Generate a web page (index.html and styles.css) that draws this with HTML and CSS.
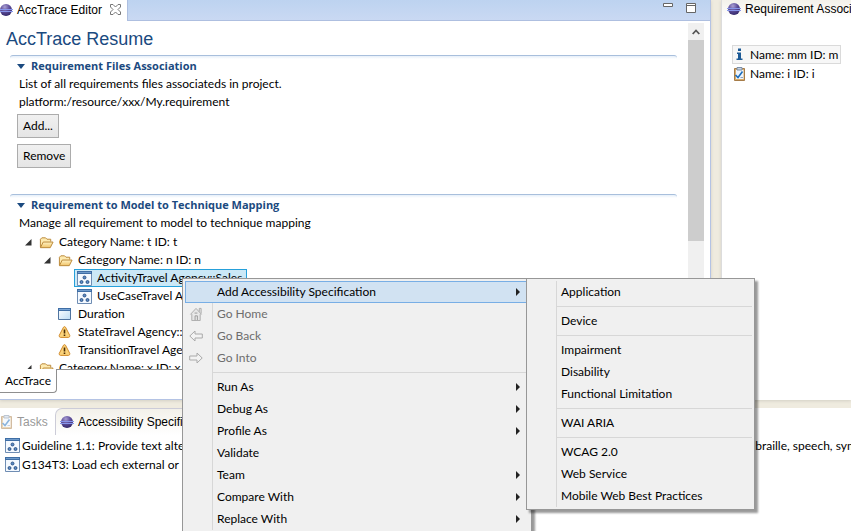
FILE: index.html
```html
<!DOCTYPE html>
<html lang="en">
<head>
<meta charset="utf-8">
<title>AccTrace Editor</title>
<link rel="stylesheet" href="styles.css">
</head>
<body>
<svg class="defs" aria-hidden="true">
  <defs>
    <radialGradient id="orb" cx="40%" cy="25%" r="75%"><stop offset="0" stop-color="#a99fd2"/><stop offset=".5" stop-color="#5f4f9c"/><stop offset="1" stop-color="#35296a"/></radialGradient>
    <linearGradient id="fold" x1="0" y1="0" x2="0" y2="1"><stop offset="0" stop-color="#fff3c4"/><stop offset="1" stop-color="#f0c368"/></linearGradient>
    <linearGradient id="sheet" x1="0" y1="0" x2="1" y2="1"><stop offset="0" stop-color="#ffffff"/><stop offset="1" stop-color="#bcdcf4"/></linearGradient>
    <symbol id="eclipse" viewBox="0 0 14 14"><circle cx="7" cy="7" r="6" fill="url(#orb)"/><path d="M0 6.500H14M0 8.500H14" stroke="#8795ea"/></symbol>
    <symbol id="folder" viewBox="0 0 16 14"><path d="M1.5 12V3.5L3 2h4l1.500 1.500H12.500V6" fill="#fdeab0" stroke="#b98534"/><path d="M1.500 12.500L4.500 6.500H15L12 12.500Z" fill="url(#fold)" stroke="#b98534"/></symbol>
    <symbol id="model" viewBox="0 0 15 15"><path d="M.5.5h14v14H.5z" fill="#f4f9ff" stroke="#6f8db3"/><path d="M0 0h15v3H0z" fill="#3f6ea5"/><path d="M1 1.500h13" stroke="#6f9bcb"/><g fill="#5b8ac4" stroke="#1d4477" stroke-width=".8"><circle cx="7.500" cy="6.500" r="1.500"/><circle cx="4.500" cy="11" r="1.500"/><circle cx="10.500" cy="11" r="1.500"/></g></symbol>
    <symbol id="window" viewBox="0 0 13 12"><path d="M.5.500h12v11H.5z" fill="url(#sheet)" stroke="#50749f"/><path d="M0 0h13v3H0z" fill="#3f6ea5"/><path d="M1 1.500h11" stroke="#79a5d6"/></symbol>
    <symbol id="warn" viewBox="0 0 12 12"><path d="M5 1.200Q6 0 7 1.200L11.300 9.500Q11.500 11.300 10 11.400H2Q.5 11.300.7 9.500Z" fill="#fbd37a" stroke="#d18a2b"/><path d="M6 3.500V7.500M6 8.500V10" stroke="#4b2c05" stroke-width="1.600"/></symbol>
    <symbol id="task" viewBox="0 0 13 15"><path d="M1.500 2.500h10v12h-10z" fill="#d9ad6c" stroke="#a67c48"/><path d="M3 4h7.500v9H3z" fill="#eef5fd"/><path d="M4 1.500h5v2.500H4z" fill="#c7d4e4" stroke="#7d8fa6"/><path d="M2.500 9l2.500 2.500L9.500 5.500" fill="none" stroke="#1c6cba" stroke-width="1.600"/><path d="M7.500 11.500h2.500" stroke="#8ca3c0"/></symbol>
    <symbol id="home" viewBox="0 0 14 15"><path d="M10.500 5V1.500h2V7M1 8L7 1.500 13 8M2.500 7.500v7h9v-7" fill="#e6e6e6" stroke="#aaa"/><path d="M6 14V9.500h2.500V14M5.500 6.500h3" fill="none" stroke="#999"/></symbol>
    <symbol id="back" viewBox="0 0 14 12"><path d="M.8 6L6 1v3h7.300v4H6v3Z" fill="#f3f3f3" stroke="#aaa"/></symbol>
    <symbol id="into" viewBox="0 0 14 12"><path d="M13.200 6L8 1v3H.7v4H8v3Z" fill="#f3f3f3" stroke="#aaa"/></symbol>
  </defs>
</svg>

<div class="workbench">
  <section class="editor">
    <header class="tabbar">
      <div class="tab">
        <svg class="orb"><use href="#eclipse"/></svg>
        <span>AccTrace Editor</span>
        <button class="close" aria-label="Close"><svg viewBox="0 0 11 11"><path d="M.5.500H3L5.500 3 8 .5h2.500V3L8 5.500 10.500 8v2.500H8L5.500 8 3 10.500H.500V8L3 5.500.5 3Z" fill="#fff" stroke="#777"/></svg></button>
      </div>
      <div class="tools">
        <button aria-label="Minimize"><svg viewBox="0 0 10 10"><path d="M.5.500h9v3h-9z" fill="#fff" stroke="#666"/></svg></button>
        <button aria-label="Maximize"><svg viewBox="0 0 10 10"><path d="M.5.500h9v9h-9zM.5 2.500h9" fill="#fff" stroke="#666"/></svg></button>
      </div>
    </header>
    <div class="view">
      <div class="form">
        <h1>AccTrace Resume</h1>
        <section class="part files">
          <h2><svg class="twist" viewBox="0 0 8 5"><path d="M0 0h8L4 5z"/></svg>Requirement Files Association</h2>
          <p>List of all requirements files associateds in project.</p>
          <p>platform:/resource/xxx/My.requirement</p>
          <div class="actions">
            <button>Add...</button>
            <button>Remove</button>
          </div>
        </section>
        <section class="part">
          <h2><svg class="twist" viewBox="0 0 8 5"><path d="M0 0h8L4 5z"/></svg>Requirement to Model to Technique Mapping</h2>
          <p>Manage all requirement to model to technique mapping</p>
          <ul class="tree">
            <li>
              <div class="node"><svg class="open" viewBox="0 0 7 7"><path d="M6.500 0V6.500H0z"/></svg><svg class="ico"><use href="#folder"/></svg><span>Category Name: t ID: t</span></div>
              <ul>
                <li>
                  <div class="node"><svg class="open" viewBox="0 0 7 7"><path d="M6.500 0V6.500H0z"/></svg><svg class="ico"><use href="#folder"/></svg><span>Category Name: n ID: n</span></div>
                  <ul>
                    <li class="leaf"><div class="node selected"><svg class="ico"><use href="#model"/></svg><span>ActivityTravel Agency::Sales</span></div></li>
                    <li class="leaf"><div class="node"><svg class="ico"><use href="#model"/></svg><span>UseCaseTravel Agency::Sales</span></div></li>
                  </ul>
                </li>
                <li class="leaf"><div class="node"><svg class="ico small"><use href="#window"/></svg><span>Duration</span></div></li>
                <li class="leaf"><div class="node"><svg class="ico small"><use href="#warn"/></svg><span>StateTravel Agency::Sales</span></div></li>
                <li class="leaf"><div class="node"><svg class="ico small"><use href="#warn"/></svg><span>TransitionTravel Agency::Sales</span></div></li>
              </ul>
            </li>
            <li><div class="node"><svg class="open" viewBox="0 0 7 7"><path d="M6.500 0V6.500H0z"/></svg><svg class="ico"><use href="#folder"/></svg><span>Category Name: x ID: x</span></div></li>
          </ul>
        </section>
      </div>
      <div class="scroll">
        <button aria-label="Scroll up"><svg viewBox="0 0 8 6"><path d="M.7 5L4 1.500 7.300 5" fill="none" stroke="#555" stroke-width="1.800"/></svg></button>
        <div class="thumb"></div>
      </div>
    </div>
    <footer class="pages"><button>AccTrace</button></footer>
  </section>

  <section class="side">
    <header><svg class="orb"><use href="#eclipse"/></svg><span>Requirement Association</span></header>
    <ul class="reqs">
      <li class="current"><svg viewBox="0 0 13 15"><path d="M5 1.500h3v2.500H5zM4 5.500h4v6h1.500V13h-6v-1.500H5V7H4z" fill="#1c5a96"/></svg><span>Name: mm ID: m</span></li>
      <li><svg><use href="#task"/></svg><span>Name: i ID: i</span></li>
    </ul>
  </section>

  <section class="bottom">
    <header>
      <button class="tasks"><svg><use href="#task"/></svg>Tasks</button>
      <button class="spec"><svg class="orb"><use href="#eclipse"/></svg>Accessibility Specification</button>
    </header>
    <ul>
      <li><svg><use href="#model"/></svg><span>Guideline 1.1: Provide text alternatives for any non-text content so that it can be changed into other forms people need, such as large print, braille, speech, symbols</span></li>
      <li><svg><use href="#model"/></svg><span>G134T3: Load ech external or internal resource</span></li>
    </ul>
  </section>
</div>

<div class="menu context" role="menu">
  <button class="active more" role="menuitem">Add Accessibility Specification</button>
  <button role="menuitem" disabled><svg><use href="#home"/></svg>Go Home</button>
  <button role="menuitem" disabled><svg><use href="#back"/></svg>Go Back</button>
  <button role="menuitem" disabled><svg><use href="#into"/></svg>Go Into</button>
  <hr>
  <button class="more" role="menuitem">Run As</button>
  <button class="more" role="menuitem">Debug As</button>
  <button class="more" role="menuitem">Profile As</button>
  <button role="menuitem">Validate</button>
  <button class="more" role="menuitem">Team</button>
  <button class="more" role="menuitem">Compare With</button>
  <button class="more" role="menuitem">Replace With</button>
</div>
<div class="menu sub" role="menu">
  <button role="menuitem">Application</button>
  <hr>
  <button role="menuitem">Device</button>
  <hr>
  <button role="menuitem">Impairment</button>
  <button role="menuitem">Disability</button>
  <button role="menuitem">Functional Limitation</button>
  <hr>
  <button role="menuitem">WAI ARIA</button>
  <hr>
  <button role="menuitem">WCAG 2.0</button>
  <button role="menuitem">Web Service</button>
  <button role="menuitem">Mobile Web Best Practices</button>
</div>
</body>
</html>
```
FILE: styles.css
```css
* { box-sizing: border-box; }
html, body { height: 100%; }
body {
  margin: 0;
  overflow: hidden;
  background: #efebdf;
  color: #000;
  font: 12px/18px Lato, "Segoe UI", sans-serif;
}
button { font: inherit; color: inherit; padding: 0; border: 0; background: none; }
ul { list-style: none; margin: 0; padding: 0; }
h1, h2, p { margin: 0; }
svg { display: block; flex: none; }
.defs { position: absolute; width: 0; height: 0; }
.orb { width: 14px; height: 14px; }

.workbench {
  display: grid;
  grid-template: minmax(0, 400fr) minmax(0, 123fr) / minmax(0, 711fr) minmax(0, 130fr);
  gap: 8px 10px;
  height: 100%;
}

/* Editor */
.editor {
  display: flex;
  flex-direction: column;
  background: #fff;
  border: solid #b4c3e4;
  border-width: 0 1px 1px 0;
  box-shadow: 0 1px 3px #d2cfc4;
}
.tabbar {
  display: flex;
  justify-content: space-between;
  height: 21px;
  background: linear-gradient(#bdd3f0, #cad9f3);
}
.tabbar, .side header, .bottom header { font: 12px/18px "Liberation Sans", Arial, sans-serif; }
.tab {
  display: flex;
  align-items: center;
  gap: 4px;
  width: 127px;
  padding-bottom: 2px;
  background: #fff;
}
.tab .orb { margin-left: -1px; }
.close { margin-left: 4px; }
.close svg { width: 11px; height: 11px; }
.tools {
  display: flex;
  flex: 1;
  justify-content: flex-end;
  align-items: flex-start;
  gap: 13px;
  padding: 3px 14px 0 0;
  border: solid #aebfe0;
  border-width: 0 0 1px 1px;
}
.tools svg { width: 10px; height: 10px; }

.view { display: flex; flex: 1; min-height: 0; padding-right: 6px; }
.form { flex: 1; min-width: 0; overflow: hidden; padding: 6px 11px 0 10px; }
h1 {
  margin: 0 0 4px -4px;
  color: #1b4a80;
  font: 18px/24px "Liberation Sans", Arial, sans-serif;
}
.part {
  padding: 1px 0 0 9px;
  border-top: 1px solid #a8bfdc;
  border-radius: 3px 3px 0 0;
  background: linear-gradient(#e6eff9, #fff 3px);
}
.files { margin-bottom: 26px; }
h2 {
  display: flex;
  align-items: center;
  gap: 6px;
  margin-left: -2px;
  color: #1b4a80;
  font: bold 11px/18px "Open Sans", sans-serif;
}
.twist { width: 8px; height: 5px; fill: #1b4a80; }
.actions {
  display: flex;
  flex-direction: column;
  align-items: flex-start;
  gap: 6px;
  margin: 3px 0 0 -2px;
}
.actions button {
  height: 24px;
  padding: 0 5px;
  border: 1px solid #acacac;
  background: linear-gradient(#f0f0f0, #e5e5e5);
}
.tree { margin-top: 1px; }
.tree ul { padding-left: 19px; }
.node { display: flex; align-items: center; gap: 5px; height: 18px; padding-left: 6px; white-space: nowrap; }
.open { width: 7px; height: 7px; margin-right: 2px; fill: #333; }
.ico { width: 15px; height: 15px; }
.small { width: 13px; height: 12px; margin-right: 2px; }
.leaf .node { width: max-content; margin-left: -1px; padding: 0 4px 0 2px; border: 1px solid transparent; }
.leaf { padding-left: 18px; }
.leaf .selected { background: #cbe8f6; border-color: #26a0da; }

.scroll { width: 16px; margin-top: 2px; background: #f0f0f0; }
.scroll button { display: grid; place-items: center; width: 100%; height: 17px; }
.scroll svg { width: 8px; height: 6px; }
.thumb { height: 58%; background: #cdcdcd; }

.pages { display: flex; height: 30px; }
.pages button {
  width: 57px;
  height: 24px;
  border: solid #8f8f8f;
  border-width: 0 1px 1px 0;
  border-radius: 0 0 4px 0;
}
.pages::after { content: ""; flex: 1; border-top: 1px solid #8f8f8f; }

/* Requirement list */
.side {
  background: #fff;
  border-left: 1px solid #dcdcdc;
  box-shadow: 0 1px 3px #d2cfc4;
  overflow: hidden;
}
.side header {
  display: flex;
  align-items: center;
  gap: 4px;
  height: 18px;
  padding-left: 5px;
  white-space: nowrap;
  background: linear-gradient(#f3f1ea, #fff);
}
.reqs { width: max-content; padding: 27px 0 0 10px; }
.reqs li { display: flex; align-items: center; gap: 4px; height: 19px; padding: 0 2px 0 0; border: 1px solid transparent; }
.reqs .current { background: #f7f7f7; border-color: #dadada; }
.reqs svg { width: 13px; height: 15px; }

/* Views below the editor */
.bottom { grid-column: 1 / -1; background: #fff; white-space: nowrap; overflow: hidden; }
.bottom header { display: flex; height: 27px; }
.bottom header button { display: flex; align-items: center; gap: 4px; }
.bottom .tasks { width: 55px; color: #999; }
.tasks svg { width: 13px; height: 15px; opacity: .5; }
.bottom .spec {
  padding: 0 12px 0 4px;
  border: solid #ccccd8;
  border-width: 1px 1px 0;
  border-radius: 7px 7px 0 0;
  background: linear-gradient(#f3f1ea, #fff);
}
.bottom ul { padding: 1px 0 0 5px; }
.bottom li { display: flex; align-items: center; gap: 2px; height: 19px; }
.bottom li svg { width: 15px; height: 15px; }

/* Menus */
.menu {
  position: absolute;
  top: 278px;
  padding: 2px;
  border: 1px solid #979797;
  background: linear-gradient(90deg, transparent 29px, #d7d7d7 29px, #d7d7d7 30px, transparent 30px) 0 2px / 100% calc(100% - 4px) no-repeat #f0f0f0;
  box-shadow: 3px 3px 2px rgba(0, 0, 0, .4);
}
.context { left: 182px; width: 350px; }
.sub { left: 526px; width: 229px; }
.menu button {
  position: relative;
  display: block;
  width: 100%;
  height: 22px;
  padding-left: 32px;
  text-align: left;
  white-space: nowrap;
}
.menu button:disabled { color: #6d6d6d; }
.menu .active { background: #d1e2f2; box-shadow: inset 0 0 0 1px #78aee5; }
.menu svg { position: absolute; left: 4px; top: 4px; width: 14px; height: 14px; }
.more::after {
  content: "";
  position: absolute;
  right: 9px;
  top: 7px;
  border: solid transparent;
  border-width: 4px 0 4px 4px;
  border-left-color: #222;
}
.menu hr { height: 1px; margin: 3px 0 3px 28px; border: 0; background: #d7d7d7; }
```
